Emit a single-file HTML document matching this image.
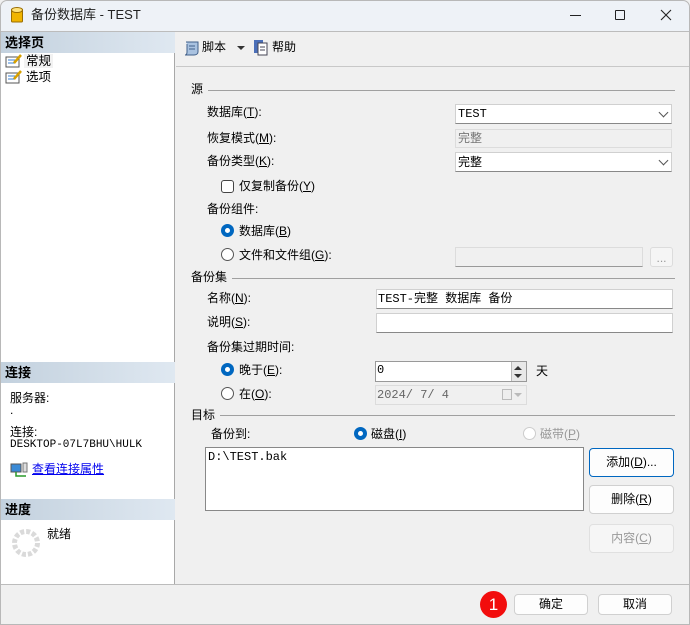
<!DOCTYPE html>
<html><head><meta charset="utf-8"><style>
*{margin:0;padding:0;box-sizing:border-box}
body{width:690px;height:625px;position:relative;overflow:hidden;background:#f0f0f0;font-family:"Liberation Sans","Noto Sans CJK SC",sans-serif;font-size:12px;color:#000}
.a{position:absolute;white-space:nowrap;line-height:14px}
.m{font-family:"Liberation Mono","Noto Sans CJK SC",monospace;font-size:12px}
.box{position:absolute;background:#fff;border:1px solid #d0d0d0;border-bottom-color:#888}
.dis{position:absolute;background:#f0f0f0;border:1px solid #dcdcdc}
.hdr{position:absolute;left:1px;width:174px;height:21px;background:linear-gradient(90deg,#c3d1de,#dfe8f1);font-weight:bold;font-size:13px;line-height:21px;padding-left:4px}
.ln{position:absolute;height:1px;background:#a0a0a0}
.btn{position:absolute;background:#fdfdfd;border:1px solid #d0d0d0;border-radius:4px;text-align:center;line-height:26px}
.rad{position:absolute;width:13px;height:13px;border-radius:50%;border:1px solid #555;background:#fff}
.rad.on{border:4px solid #0067c0;background:#fff}
.chev{position:absolute;width:7px;height:7px;border-right:1px solid #555;border-bottom:1px solid #555;transform:rotate(45deg)}
</style></head><body>
<!-- frame -->
<div style="position:absolute;left:0;top:0;width:690px;height:625px;border:1px solid #b8b8b8;border-radius:7px 7px 0 0"></div>
<div style="position:absolute;left:1px;top:1px;width:688px;height:30px;background:#eef2f7;border-radius:7px 7px 0 0"></div>
<div class="ln" style="left:1px;top:31px;width:688px;background:#bcbcbc"></div>
<svg class="a" style="left:11px;top:7px" width="12" height="17"><rect x="0.5" y="2" width="11" height="13" rx="1" fill="#f0b400" stroke="#9a6d00"/><ellipse cx="6" cy="3" rx="5.5" ry="2.5" fill="#ffe27a" stroke="#9a6d00"/></svg>
<div class="a" style="left:31px;top:8px;font-size:13px;color:#222">备份数据库 - TEST</div>
<div class="a" style="left:570px;top:15px;width:11px;height:1px;background:#222"></div>
<div class="a" style="left:615px;top:10px;width:10px;height:10px;border:1px solid #222;border-radius:1px"></div>
<svg class="a" style="left:660px;top:9px" width="12" height="12"><path d="M1 1L11 11M11 1L1 11" stroke="#222" stroke-width="1.1"/></svg>
<!-- left panel -->
<div style="position:absolute;left:1px;top:32px;width:174px;height:552px;background:#fff;border-right:1px solid #a8a8a8"></div>
<div class="hdr" style="top:32px">选择页</div>
<svg class="a" style="left:5px;top:54px" width="18" height="14"><rect x="1" y="3" width="13" height="10" fill="#fff" stroke="#555"/><path d="M3 6h7M3 9h7" stroke="#3a7fd0"/><path d="M9 9L16 1" stroke="#d7a000" stroke-width="2.5"/></svg>
<div class="a" style="left:24px;top:54px;background:#f2f2f2;padding:0 2px;font-size:12.5px">常规</div>
<svg class="a" style="left:5px;top:70px" width="18" height="14"><rect x="1" y="3" width="13" height="10" fill="#fff" stroke="#555"/><path d="M3 6h7M3 9h7" stroke="#3a7fd0"/><path d="M9 9L16 1" stroke="#d7a000" stroke-width="2.5"/></svg>
<div class="a" style="left:26px;top:70px;font-size:12.5px">选项</div>
<div class="hdr" style="top:362px">连接</div>
<div class="a" style="left:10px;top:391px">服务器:</div>
<div class="a" style="left:10px;top:403px">.</div>
<div class="a" style="left:10px;top:425px">连接:</div>
<div class="a m" style="left:10px;top:438px;font-size:11px">DESKTOP-07L7BHU\HULK</div>
<svg class="a" style="left:10px;top:462px" width="18" height="16"><rect x="1" y="2" width="10" height="8" fill="#3a8ad6" stroke="#555"/><rect x="13" y="1" width="4" height="9" fill="#ddd" stroke="#777"/><path d="M6 10v4h10" stroke="#2a9a2a" fill="none" stroke-width="1.5"/></svg>
<div class="a" style="left:32px;top:462px;color:#0000ee;text-decoration:underline">查看连接属性</div>
<div class="hdr" style="top:499px">进度</div>
<svg class="a" style="left:11px;top:528px" width="30" height="30"><circle cx="15" cy="15" r="11.5" fill="none" stroke="#dadada" stroke-width="5" stroke-dasharray="4 2"/></svg>
<div class="a" style="left:47px;top:527px">就绪</div>
<!-- toolbar -->
<div class="ln" style="left:176px;top:66px;width:513px;background:#c8c8c8"></div>
<svg class="a" style="left:183px;top:40px" width="18" height="16"><path d="M3 2h12v10c0 2-2 3-4 3H2c2 0 2-2 2-3V4" fill="#a9c2e0" stroke="#41608a"/><path d="M6 6h6M6 9h6" stroke="#41608a"/></svg>
<div class="a" style="left:202px;top:40px">脚本</div>
<div class="a" style="left:237px;top:46px;width:0;height:0;border-left:4px solid transparent;border-right:4px solid transparent;border-top:4px solid #333"></div>
<svg class="a" style="left:253px;top:39px" width="16" height="17"><rect x="1" y="1" width="9" height="13" fill="#4b6fb8"/><rect x="5" y="4" width="9" height="12" fill="#fff" stroke="#445"/><path d="M7 8h5M7 11h5" stroke="#445"/></svg>
<div class="a" style="left:272px;top:40px">帮助</div>
<!-- source -->
<div class="a" style="left:191px;top:82px">源</div>
<div class="ln" style="left:208px;top:90px;width:467px"></div>
<div class="a" style="left:207px;top:105px">数据库(<u>T</u>):</div>
<div class="box" style="left:455px;top:104px;width:217px;height:20px"></div>
<div class="a m" style="left:458px;top:107px">TEST</div>
<div class="chev" style="left:660px;top:109px"></div>
<div class="a" style="left:207px;top:131px">恢复模式(<u>M</u>):</div>
<div class="dis" style="left:455px;top:129px;width:217px;height:19px"></div>
<div class="a" style="left:458px;top:131px;color:#777">完整</div>
<div class="a" style="left:207px;top:154px">备份类型(<u>K</u>):</div>
<div class="box" style="left:455px;top:152px;width:217px;height:20px"></div>
<div class="a" style="left:458px;top:155px">完整</div>
<div class="chev" style="left:660px;top:157px"></div>
<div class="a" style="left:221px;top:180px;width:13px;height:13px;border:1px solid #444;border-radius:3px;background:#fff"></div>
<div class="a" style="left:239px;top:179px">仅复制备份(<u>Y</u>)</div>
<div class="a" style="left:207px;top:202px">备份组件:</div>
<div class="rad on" style="left:221px;top:224px"></div>
<div class="a" style="left:239px;top:224px">数据库(<u>B</u>)</div>
<div class="rad" style="left:221px;top:248px"></div>
<div class="a" style="left:239px;top:248px">文件和文件组(<u>G</u>):</div>
<div class="dis" style="left:455px;top:247px;width:188px;height:20px;border-bottom-color:#999"></div>
<div class="dis" style="left:650px;top:247px;width:23px;height:20px;border-radius:3px;background:#f5f5f5;color:#999;text-align:center;line-height:20px">...</div>
<!-- set -->
<div class="a" style="left:191px;top:270px">备份集</div>
<div class="ln" style="left:232px;top:278px;width:443px"></div>
<div class="a" style="left:207px;top:291px">名称(<u>N</u>):</div>
<div class="box" style="left:376px;top:289px;width:297px;height:20px"></div>
<div class="a m" style="left:378px;top:292px">TEST-完整 数据库 备份</div>
<div class="a" style="left:207px;top:315px">说明(<u>S</u>):</div>
<div class="box" style="left:376px;top:313px;width:297px;height:20px"></div>
<div class="a" style="left:207px;top:340px">备份集过期时间:</div>
<div class="rad on" style="left:221px;top:363px"></div>
<div class="a" style="left:239px;top:363px">晚于(<u>E</u>):</div>
<div class="box" style="left:375px;top:361px;width:152px;height:21px;border-color:#999"></div>
<div class="a m" style="left:377px;top:363px">0</div>
<div class="a" style="left:511px;top:362px;width:15px;height:19px;background:#e8e8e8;border-left:1px solid #bbb"></div>
<div class="a" style="left:514px;top:366px;border-left:4px solid transparent;border-right:4px solid transparent;border-bottom:4px solid #333"></div>
<div class="a" style="left:514px;top:374px;border-left:4px solid transparent;border-right:4px solid transparent;border-top:4px solid #333"></div>
<div class="a" style="left:536px;top:364px">天</div>
<div class="rad" style="left:221px;top:387px"></div>
<div class="a" style="left:239px;top:387px">在(<u>O</u>):</div>
<div class="dis" style="left:375px;top:385px;width:152px;height:20px;background:#f0f0f0"></div>
<div class="a m" style="left:377px;top:388px;color:#666">2024/ 7/ 4</div>
<div class="a" style="left:502px;top:389px;width:10px;height:11px;border:1px solid #bbb;background:#eee"></div>
<div class="a" style="left:514px;top:393px;border-left:4px solid transparent;border-right:4px solid transparent;border-top:4px solid #bbb"></div>
<!-- target -->
<div class="a" style="left:191px;top:408px">目标</div>
<div class="ln" style="left:220px;top:415px;width:455px"></div>
<div class="a" style="left:211px;top:427px">备份到:</div>
<div class="rad on" style="left:354px;top:427px"></div>
<div class="a" style="left:371px;top:427px">磁盘(<u>I</u>)</div>
<div class="rad" style="left:523px;top:427px;border-color:#ccc"></div>
<div class="a" style="left:540px;top:427px;color:#999">磁带(<u>P</u>)</div>
<div class="box" style="left:205px;top:447px;width:379px;height:64px;border-color:#888"></div>
<div class="a m" style="left:208px;top:450px">D:\TEST.bak</div>
<div class="btn" style="left:589px;top:448px;width:85px;height:29px;border-color:#0067c0">添加(<u>D</u>)...</div>
<div class="btn" style="left:589px;top:485px;width:85px;height:29px">删除(<u>R</u>)</div>
<div class="btn" style="left:589px;top:524px;width:85px;height:29px;color:#999;background:#f6f6f6;border-color:#e0e0e0">内容(<u>C</u>)</div>
<!-- bottom -->
<div class="ln" style="left:1px;top:584px;width:688px;background:#bcbcbc"></div>
<div class="a" style="left:480px;top:591px;width:27px;height:27px;border-radius:50%;background:#f20d0d;color:#fff;font-size:17px;line-height:27px;text-align:center">1</div>
<div class="btn" style="left:514px;top:594px;width:74px;height:21px;line-height:19px">确定</div>
<div class="btn" style="left:598px;top:594px;width:74px;height:21px;line-height:19px">取消</div>
</body></html>
